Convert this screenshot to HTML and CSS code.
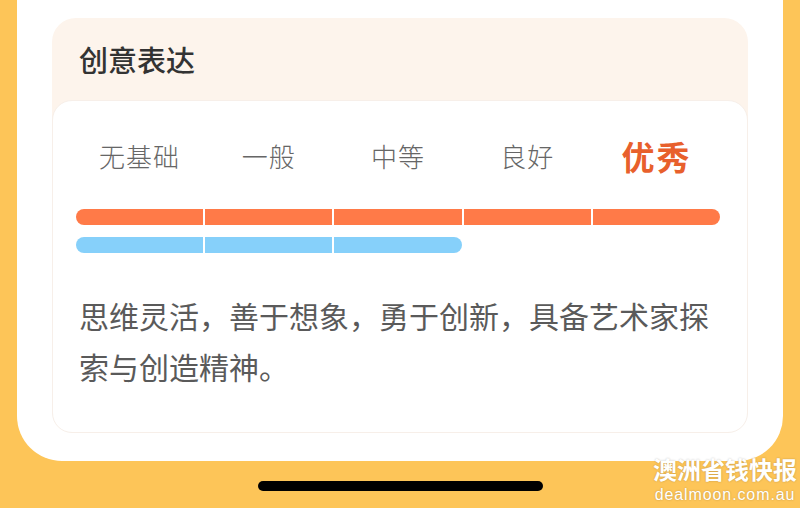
FILE: index.html
```html
<!DOCTYPE html>
<html lang="zh-CN">
<head>
    <meta charset="UTF-8">
    <meta name="viewport" content="width=device-width, initial-scale=1.0">
    <title>创意表达</title>
    <link rel="stylesheet" href="styles.css">
</head>
<body>
    <div class="sheet">
        <div class="panel">
            <h2 class="panel-title">创意表达</h2>
            <div class="card">
                <div class="levels">
                    <span>无基础</span>
                    <span>一般</span>
                    <span>中等</span>
                    <span>良好</span>
                    <span class="active">优秀</span>
                </div>
                <div class="bar bar-orange">
                    <i></i><i></i><i></i><i></i><i></i>
                </div>
                <div class="bar bar-blue">
                    <i></i><i></i><i></i>
                </div>
                <p class="desc">思维灵活，善于想象，勇于创新，具备艺术家探索与创造精神。</p>
            </div>
        </div>
    </div>
    <div class="home-bar"></div>

    <div class="watermark">
        <div class="wm-cn">澳洲省钱快报</div>
        <div class="wm-en">dealmoon.com.au</div>
    </div>
</body>
</html>
```

FILE: styles.css
```css
html, body {
    margin: 0;
    padding: 0;
}
body {
    width: 800px;
    height: 508px;
    overflow: hidden;
    position: relative;
    background-color: #fdc558;
    font-family: "Noto Sans CJK SC", "Noto Sans", sans-serif;
}
.sheet {
    margin: 0 17px;
    padding: 18px 35px 28px;
    background-color: #fff;
    border-radius: 0 0 45px 45px;
}
.panel {
    background-color: #fdf4ec;
    border-radius: 24px;
}
.panel-title {
    margin: 0;
    height: 82px;
    padding-left: 27px;
    font-size: 29px;
    font-weight: 500;
    line-height: 82px;
    color: #333;
}
.card {
    height: 331px;
    padding: 0 27px 0 23px;
    background-color: #fff;
    border: 1px solid #f7efe9;
    border-radius: 20px;
}
.levels {
    display: grid;
    grid-template-columns: repeat(5, 1fr);
    column-gap: 2px;
    margin-top: 35px;
    height: 40px;
    line-height: 40px;
    text-align: center;
}
.levels span {
    font-size: 26px;
    font-weight: 300;
    color: #666;
    letter-spacing: 1px;
}
.levels .active {
    font-size: 33px;
    font-weight: 700;
    color: #e8602c;
    letter-spacing: 2px;
}
.bar {
    display: grid;
    grid-template-columns: repeat(5, 1fr);
    column-gap: 2px;
    height: 16px;
}
.bar i {
    display: block;
}
.bar i:first-child {
    border-radius: 8px 0 0 8px;
}
.bar i:last-child {
    border-radius: 0 8px 8px 0;
}
.bar-orange {
    margin-top: 33px;
}
.bar-orange i {
    background-color: #ff7a48;
}
.bar-blue {
    margin-top: 12px;
}
.bar-blue i {
    background-color: #86d0fa;
}
.desc {
    margin: 37px 0 0 3px;
    font-size: 30px;
    line-height: 51px;
    color: #5a5a5a;
}
.home-bar {
    width: 285px;
    height: 10px;
    margin: 20px auto 0;
    background-color: #000;
    border-radius: 5px;
}
.watermark {
    position: absolute;
    right: 3px;
    bottom: 6px;
    color: #fff;
    text-align: center;
    text-shadow: 0 0 2px rgba(0, 0, 0, 0.25);
}
.wm-cn {
    font-size: 24px;
    font-weight: 700;
    line-height: 22px;
    margin-bottom: 8px;
}
.wm-en {
    font-family: "Liberation Sans", sans-serif;
    font-size: 16px;
    line-height: 14px;
    letter-spacing: 0.9px;
}
```
